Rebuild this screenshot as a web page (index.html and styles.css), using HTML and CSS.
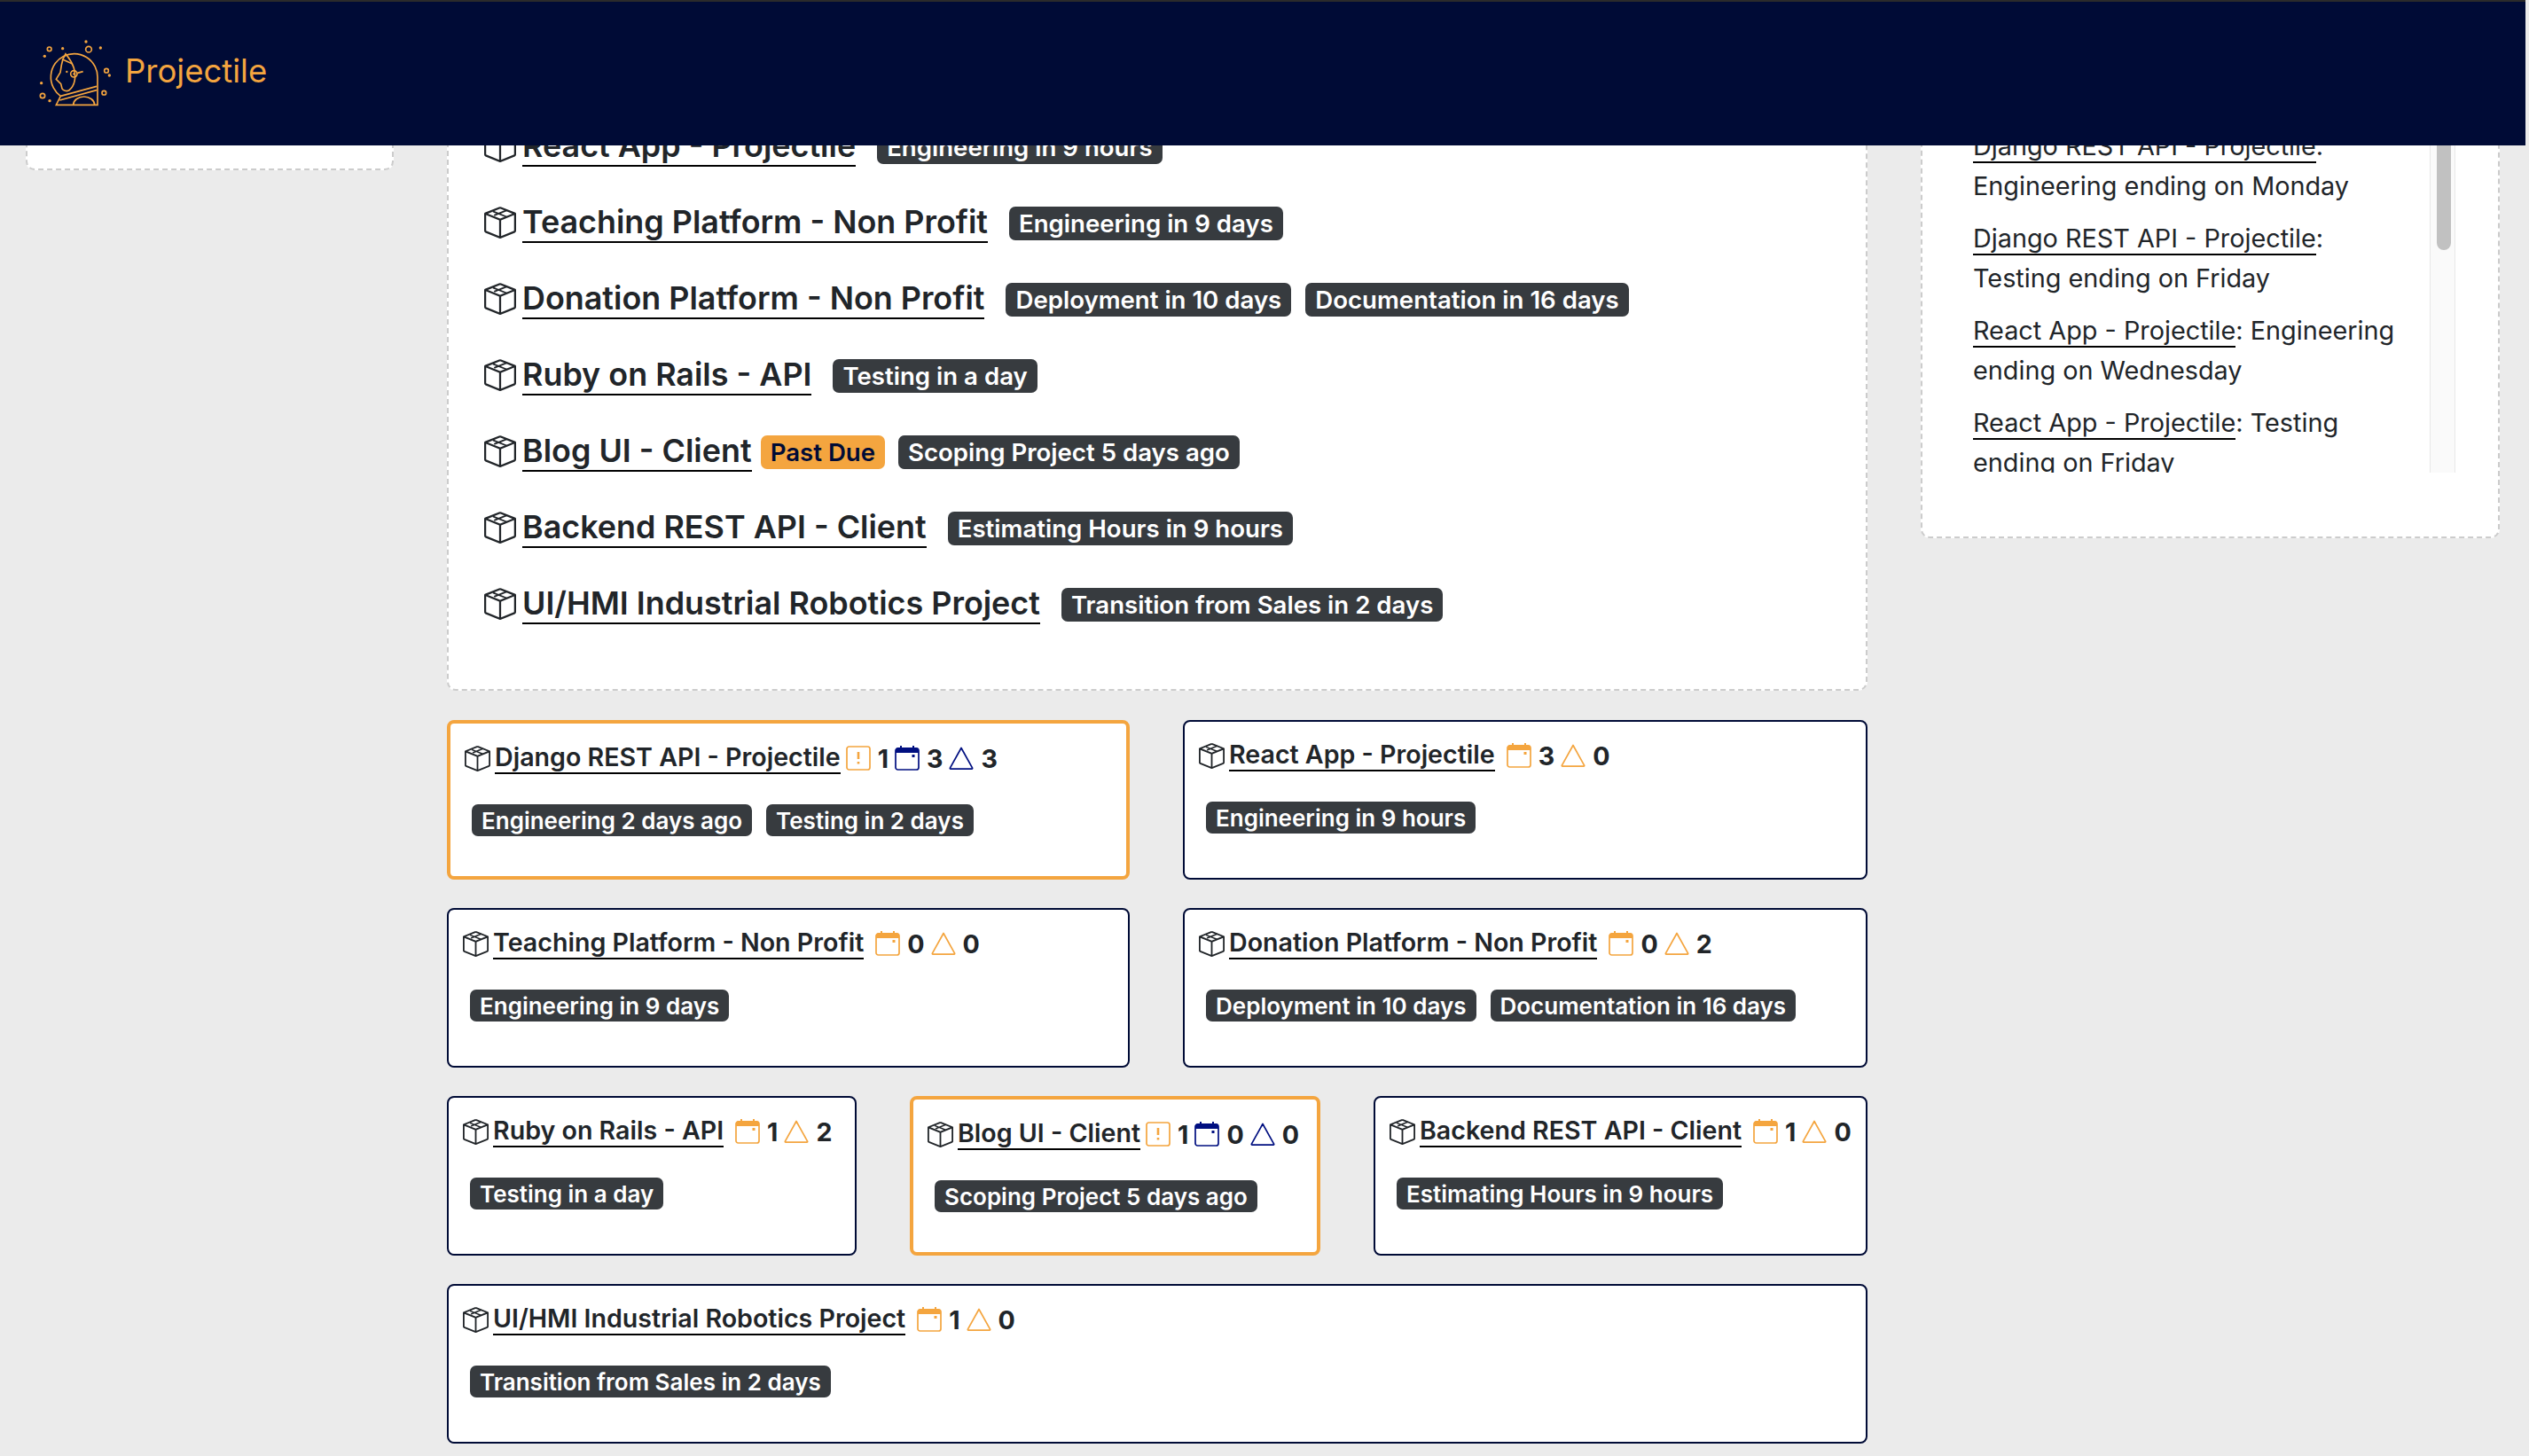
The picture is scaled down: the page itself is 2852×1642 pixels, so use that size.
FILE: index.html
```html
<!DOCTYPE html>
<html lang="en">
<head>
<meta charset="UTF-8">
<title>Projectile</title>
<link rel="stylesheet" href="styles.css">
</head>
<body>
<svg class="sprites" width="0" height="0">
  <symbol id="i-box" viewBox="0 0 16 16">
    <path d="M8.186 1.113a.5.5 0 0 0-.372 0L1.846 3.5 8 5.961 14.154 3.5 8.186 1.113zM15 4.239l-6.5 2.6v7.922l6.5-2.6V4.24zM7.5 14.762V6.838L1 4.239v7.925l6.5 2.6zM7.443.184a1.5 1.5 0 0 1 1.114 0l7.129 2.852A.5.5 0 0 1 16 3.5v8.662a1 1 0 0 1-.629.928l-7.185 2.874a.5.5 0 0 1-.372 0L.63 13.09a1 1 0 0 1-.63-.928V3.5a.5.5 0 0 1 .314-.464L7.443.184z"/>
    <path d="M4.4 2.4l6.8 2.7M11.4 1.8 5 4.4" fill="none" stroke="currentColor" stroke-width=".8"/>
  </symbol>
  <symbol id="i-flag" viewBox="0 0 28 28">
    <rect x="1" y="1" width="26" height="26" rx="2.5" fill="none" stroke="currentColor" stroke-width="1.7"/>
    <path d="M14 7v8M14 18v2.5" fill="none" stroke="currentColor" stroke-width="2.6"/>
  </symbol>
  <symbol id="i-cal" viewBox="0 0 28 28">
    <path d="M6 0h2v3H6zM20 0h2v3h-2z" fill="currentColor"/>
    <path d="M1 5a3 3 0 0 1 3-3h20a3 3 0 0 1 3 3v3H1z" fill="currentColor"/>
    <rect x="1" y="3" width="26" height="24" rx="2.5" fill="none" stroke="currentColor" stroke-width="1.7"/>
    <rect x="19.5" y="10" width="3" height="3" fill="currentColor"/>
  </symbol>
  <symbol id="i-tri" viewBox="0 0 28 28">
    <path d="M14 2.5 26.6 25.2a.7.7 0 0 1-.6 1H2a.7.7 0 0 1-.6-1z" fill="none" stroke="currentColor" stroke-width="1.7" stroke-linejoin="round"/>
  </symbol>
</svg>

<header class="topbar">
  <svg class="logo" viewBox="0 0 270 270" fill="none" stroke="#f4a53f" stroke-width="5">
    <path d="M85 205A79 79 0 1 1 210 141V235H70L85 205"/>
    <path d="M85 205 207 172M82 219 207 185M128 235A36 28 0 0 1 200 235"/>
    <path d="M102 62C110 72 122 85 130 110 138 140 134 170 113 186 104 190 94 186 90 180L86 164 70 148 84 125 88 100C90 85 96 72 102 62Z"/>
    <path d="M90 80 125 96"/>
    <circle cx="130" cy="130" r="11"/>
    <path d="M142 127 161 122"/>
    <circle cx="180" cy="47" r="10"/>
    <circle cx="47" cy="46" r="7"/>
    <circle cx="240" cy="119" r="7"/>
    <circle cx="232" cy="194" r="7"/>
    <circle cx="24" cy="204" r="8"/>
    <g fill="#f4a53f" stroke="none">
      <circle cx="130" cy="130" r="3.5"/>
      <circle cx="106" cy="123" r="3.5"/>
      <circle cx="171" cy="21" r="5"/>
      <circle cx="92" cy="44" r="5"/>
      <circle cx="220" cy="42" r="5"/>
      <circle cx="31" cy="70" r="5"/>
      <circle cx="250" cy="135" r="5"/>
      <circle cx="20" cy="161" r="5"/>
      <circle cx="48" cy="221" r="5"/>
    </g>
  </svg>
  <span class="brand">Projectile</span>
</header>

<main class="page">
  <aside class="panel panel-left"></aside>

  <div class="center">
    <section class="panel project-list">
      <div class="project-row">
        <svg class="box"><use href="#i-box"/></svg>
        <a class="title" href="#">React App - Projectile</a>
        <span class="badge">Engineering in 9 hours</span>
      </div>
      <div class="project-row">
        <svg class="box"><use href="#i-box"/></svg>
        <a class="title" href="#">Teaching Platform - Non Profit</a>
        <span class="badge">Engineering in 9 days</span>
      </div>
      <div class="project-row">
        <svg class="box"><use href="#i-box"/></svg>
        <a class="title" href="#">Donation Platform - Non Profit</a>
        <span class="badge">Deployment in 10 days</span>
        <span class="badge">Documentation in 16 days</span>
      </div>
      <div class="project-row">
        <svg class="box"><use href="#i-box"/></svg>
        <a class="title" href="#">Ruby on Rails - API</a>
        <span class="badge">Testing in a day</span>
      </div>
      <div class="project-row">
        <svg class="box"><use href="#i-box"/></svg>
        <a class="title" href="#">Blog UI - Client</a>
        <span class="badge badge-late">Past Due</span>
        <span class="badge">Scoping Project 5 days ago</span>
      </div>
      <div class="project-row">
        <svg class="box"><use href="#i-box"/></svg>
        <a class="title" href="#">Backend REST API - Client</a>
        <span class="badge">Estimating Hours in 9 hours</span>
      </div>
      <div class="project-row">
        <svg class="box"><use href="#i-box"/></svg>
        <a class="title" href="#">UI/HMI Industrial Robotics Project</a>
        <span class="badge">Transition from Sales in 2 days</span>
      </div>
    </section>

    <div class="card-row">
      <article class="card card-late">
        <div class="card-head">
          <svg class="box"><use href="#i-box"/></svg>
          <a class="title" href="#">Django REST API - Projectile</a>
          <svg class="ico warn"><use href="#i-flag"/></svg><b>1</b>
          <svg class="ico navy"><use href="#i-cal"/></svg><b>3</b>
          <svg class="ico navy"><use href="#i-tri"/></svg><b>3</b>
        </div>
        <div class="card-badges"><span class="badge">Engineering 2 days ago</span><span class="badge">Testing in 2 days</span></div>
      </article>
      <article class="card">
        <div class="card-head">
          <svg class="box"><use href="#i-box"/></svg>
          <a class="title title-gap" href="#">React App - Projectile</a>
          <svg class="ico warn"><use href="#i-cal"/></svg><b>3</b>
          <svg class="ico warn"><use href="#i-tri"/></svg><b>0</b>
        </div>
        <div class="card-badges"><span class="badge">Engineering in 9 hours</span></div>
      </article>
    </div>

    <div class="card-row">
      <article class="card">
        <div class="card-head">
          <svg class="box"><use href="#i-box"/></svg>
          <a class="title title-gap" href="#">Teaching Platform - Non Profit</a>
          <svg class="ico warn"><use href="#i-cal"/></svg><b>0</b>
          <svg class="ico warn"><use href="#i-tri"/></svg><b>0</b>
        </div>
        <div class="card-badges"><span class="badge">Engineering in 9 days</span></div>
      </article>
      <article class="card">
        <div class="card-head">
          <svg class="box"><use href="#i-box"/></svg>
          <a class="title title-gap" href="#">Donation Platform - Non Profit</a>
          <svg class="ico warn"><use href="#i-cal"/></svg><b>0</b>
          <svg class="ico warn"><use href="#i-tri"/></svg><b>2</b>
        </div>
        <div class="card-badges"><span class="badge">Deployment in 10 days</span><span class="badge">Documentation in 16 days</span></div>
      </article>
    </div>

    <div class="card-row card-row-three">
      <article class="card">
        <div class="card-head">
          <svg class="box"><use href="#i-box"/></svg>
          <a class="title title-gap" href="#">Ruby on Rails - API</a>
          <svg class="ico warn"><use href="#i-cal"/></svg><b>1</b>
          <svg class="ico warn"><use href="#i-tri"/></svg><b>2</b>
        </div>
        <div class="card-badges"><span class="badge">Testing in a day</span></div>
      </article>
      <article class="card card-late">
        <div class="card-head">
          <svg class="box"><use href="#i-box"/></svg>
          <a class="title" href="#">Blog UI - Client</a>
          <svg class="ico warn"><use href="#i-flag"/></svg><b>1</b>
          <svg class="ico navy"><use href="#i-cal"/></svg><b>0</b>
          <svg class="ico navy"><use href="#i-tri"/></svg><b>0</b>
        </div>
        <div class="card-badges"><span class="badge">Scoping Project 5 days ago</span></div>
      </article>
      <article class="card">
        <div class="card-head">
          <svg class="box"><use href="#i-box"/></svg>
          <a class="title title-gap" href="#">Backend REST API - Client</a>
          <svg class="ico warn"><use href="#i-cal"/></svg><b>1</b>
          <svg class="ico warn"><use href="#i-tri"/></svg><b>0</b>
        </div>
        <div class="card-badges"><span class="badge">Estimating Hours in 9 hours</span></div>
      </article>
    </div>

    <div class="card-row card-row-one">
      <article class="card">
        <div class="card-head">
          <svg class="box"><use href="#i-box"/></svg>
          <a class="title title-gap" href="#">UI/HMI Industrial Robotics Project</a>
          <svg class="ico warn"><use href="#i-cal"/></svg><b>1</b>
          <svg class="ico warn"><use href="#i-tri"/></svg><b>0</b>
        </div>
        <div class="card-badges"><span class="badge">Transition from Sales in 2 days</span></div>
      </article>
    </div>
  </div>

  <aside class="panel panel-right">
    <div class="feed-wrap">
      <div class="feed">
        <p><a href="#">Django REST API - Projectile</a>: Engineering ending on Monday</p>
        <p><a href="#">Django REST API - Projectile</a>: Testing ending on Friday</p>
        <p><a href="#">React App - Projectile</a>: Engineering ending on Wednesday</p>
        <p><a href="#">React App - Projectile</a>: Testing ending on Friday</p>
      </div>
      <div class="track"><div class="thumb"></div></div>
    </div>
  </aside>
</main>
</body>
</html>
```

FILE: styles.css
```css
html, body {
  margin: 0;
  height: 1642px;
  overflow: hidden;
}
body {
  background-color: #ebebeb;
  color: #212529;
  font-family: Inter, "Liberation Sans", sans-serif;
}
a {
  color: inherit;
  text-decoration: none;
}
.sprites {
  position: absolute;
}
.topbar {
  position: fixed;
  top: 0;
  left: 0;
  right: 4px;
  z-index: 5;
  height: 162px;
  display: flex;
  align-items: center;
  gap: 11px;
  padding-left: 40px;
  background-color: #000b36;
  border-top: 2px solid #2b2b2b;
}
.logo {
  width: 90px;
  height: 90px;
  margin-top: 4px;
}
.brand {
  color: #f4a53f;
  font-size: 36.5px;
  margin-bottom: 6px;
}

/* the panels start under the fixed header, as on the scrolled page */
.page {
  display: grid;
  grid-template-columns: 415px 1602px 653px;
  column-gap: 60px;
  align-items: start;
  padding-left: 29px;
}
.panel {
  box-sizing: border-box;
  background-color: #fff;
  border: 2px dashed #ccc;
  border-radius: 10px;
}
.panel-left {
  height: 192px;
}
.project-list {
  height: 779px;
  padding: 0 38px 53px 40px;
  display: flex;
  flex-direction: column;
  justify-content: flex-end;
  margin-bottom: 33px;
}
.project-row {
  display: flex;
  align-items: center;
  height: 86px;
}
.project-row .box {
  width: 36px;
  height: 36px;
  margin-right: 7px;
}
.project-row .title {
  font-size: 35.9px;
  font-weight: 600;
  line-height: 44px;
  margin-right: 24px;
}
.project-row .badge {
  margin: 2px 16px 0 0;
  font-size: 27.6px;
}
.title {
  border-bottom: 2px solid #000;
}
.box {
  color: #212529;
  fill: currentColor;
  flex: none;
}
.badge {
  display: inline-flex;
  align-items: center;
  height: 38px;
  padding: 0 11px;
  border-radius: 7px;
  background-color: #373b3f;
  color: #fff;
  font-size: 26px;
  font-weight: 600;
  white-space: nowrap;
}
.project-row .badge-late {
  background-color: #f4a53f;
  color: #000b36;
  margin-left: -14px;
  margin-right: 15px;
}
.card-row {
  display: grid;
  grid-template-columns: 770px 772px;
  column-gap: 60px;
  margin-bottom: 32px;
}
.card-row-three {
  grid-template-columns: 462px 463px 557px;
}
.card-row-one {
  grid-template-columns: 1fr;
}
.card {
  box-sizing: border-box;
  height: 180px;
  padding: 23px 16px 0;
  background-color: #fff;
  border: 2px solid #000b36;
  border-radius: 8px;
}
.card-late {
  padding: 24px 16px 0;
  border: 4px solid #f4a53f;
}
.card-head {
  display: flex;
  align-items: center;
  height: 30px;
  font-size: 28.6px;
  font-weight: 600;
  white-space: nowrap;
}
.card-head .box {
  width: 29px;
  height: 29px;
  margin-right: 5px;
}
.card-head .title {
  line-height: 34px;
  margin-right: 6px;
}
.card-head .title-gap {
  margin-right: 13px;
}
.card-head b {
  font-weight: 700;
  margin: 0 7px 0 8px;
}
.ico {
  width: 28px;
  height: 28px;
  flex: none;
}
.warn {
  color: #f4a53f;
}
.navy {
  color: #000f80;
}
.card-badges {
  display: flex;
  gap: 16px;
  margin: 37px 0 0 8px;
}
.card-badges .badge {
  height: 36px;
}
.panel-right {
  height: 607px;
  padding: 0 48px 0 57px;
}
.feed-wrap {
  display: flex;
  height: 531px;
  justify-content: space-between;
}
.feed {
  width: 484px;
  overflow: hidden;
  box-sizing: border-box;
  padding-top: 141px;
  font-size: 28.8px;
  line-height: 44.5px;
}
.feed p {
  margin: 0 0 15px;
}
.feed a {
  border-bottom: 2px solid #000;
}
.track {
  width: 16px;
  padding: 0 4px 0 7px;
  background-color: #fafafa;
  border: solid #e8e8e8;
  border-width: 0 1px;
}
.thumb {
  height: 280px;
  background-color: #c1c1c1;
  border-radius: 8px;
}
```
